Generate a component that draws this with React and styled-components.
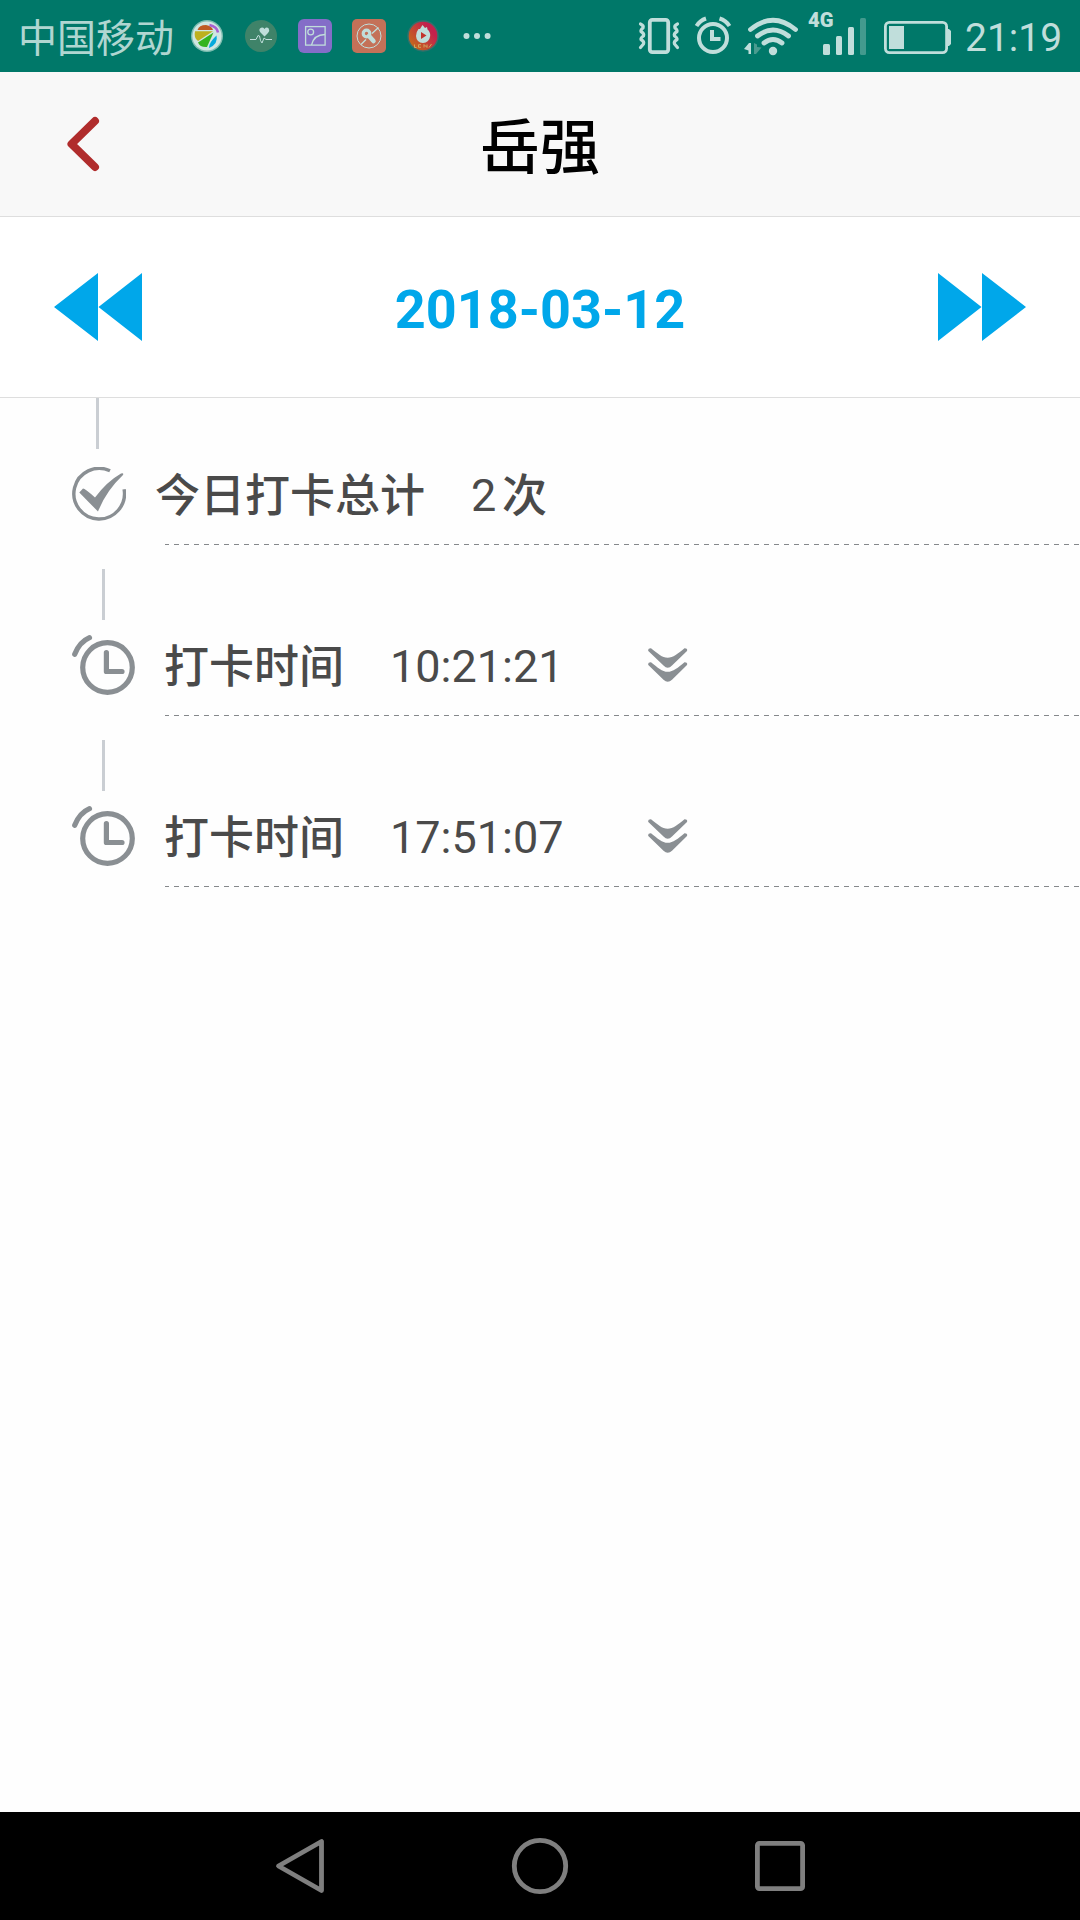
import React, { useState } from "react";
import styled, { createGlobalStyle } from "styled-components";

const punches = ["10:21:21", "17:51:07"];

function BallIcon() {
  return (
    <svg width="34" height="34" viewBox="190 19 34 34">
      <circle cx="207" cy="36" r="16" fill="#7dbdb0" />
      <circle cx="207" cy="36" r="14.6" fill="#cfe6e2" />
      <path d="M197.500 30 Q199 25 206 25 Q212 26 213 30 Z" fill="#bf5a22" />
      <path d="M195 31.300 H213 L198 41 Q193.500 38 195 31.300 Z" fill="#bdb01f" />
      <path d="M213.500 32.500 L207 47 Q200 47.500 198 42.500 Z" fill="#34b41f" />
      <path d="M216.500 35.500 Q218.500 44 209 48 Q208.500 43 216.500 35.500 Z" fill="#04a9dc" />
      <path d="M209.500 25 Q217 26.500 218 32.500" fill="none" stroke="#a75fd0" strokeWidth="2.600" />
    </svg>
  );
}

function HeartIcon() {
  return (
    <svg width="34" height="34" viewBox="244 19 34 34">
      <circle cx="261" cy="36" r="16" fill="#3f8369" />
      <path
        d="M264.500 36.500 L260.500 32.500 Q258.500 30 260 28.500 Q262.500 26.500 264.500 29 Q266.500 26.500 268.700 28.500 Q270 30.500 268 33 Z"
        fill="#c0dedb"
      />
      <path
        d="M250 39.500 H256 L258 35.500 L259.500 36 L260.500 40.500 L262 43 L264 38 L266 39.500 H272"
        fill="none"
        stroke="#c0dedb"
        strokeWidth="1"
      />
    </svg>
  );
}

function PictureIcon() {
  return (
    <svg width="34" height="34" viewBox="298 19 34 34">
      <rect x="298" y="19" width="34" height="34" rx="6" fill="#846dc8" />
      <g fill="none" stroke="#c0dedb" strokeWidth="1.300">
        <rect x="305.600" y="26.600" width="19.500" height="18.500" />
        <circle cx="310.700" cy="32" r="2.900" />
        <path d="M311.500 45 Q314 34.500 325 34.500" />
      </g>
    </svg>
  );
}

function ToolIcon() {
  return (
    <svg width="34" height="34" viewBox="352 19 34 34">
      <rect x="352" y="19" width="34" height="34" rx="5" fill="#c47158" />
      <circle cx="369" cy="36" r="12" fill="none" stroke="#c0dedb" strokeWidth="1" />
      <path d="M361 44.500 L366 39.500 M372 33.500 L378.500 27.500" stroke="#c0dedb" strokeWidth="1.400" />
      <circle cx="366.500" cy="33.500" r="3.300" fill="none" stroke="#c0dedb" strokeWidth="3.200" />
      <path d="M369 36 L373.500 41" stroke="#c0dedb" strokeWidth="4.500" strokeLinecap="round" />
    </svg>
  );
}

function FlameIcon() {
  return (
    <svg width="34" height="34" viewBox="406 19 34 34">
      <defs>
        <linearGradient id="flame" x1="0" y1="1" x2="1" y2="0.200">
          <stop offset="0.150" stopColor="#c56a1c" />
          <stop offset="0.800" stopColor="#c2214c" />
        </linearGradient>
      </defs>
      <circle cx="423" cy="36" r="15" fill="url(#flame)" stroke="#35706c" strokeWidth="1.400" />
      <path
        d="M422.500 25 L425 28 L427 27 L427.500 29.500 Q430.500 32 430.200 36 Q429 43 423 43 Q416.500 42.500 416 36 Q416 32 418.500 29 L420 29 Z"
        fill="#c0dedb"
      />
      <path d="M421 32 L426.500 35.500 L421 39 Z" fill="#c2332c" />
      <path
        d="M414.500 44.500 V47.500 H416.500 M421 44.700 H418.500 V47.300 H421 M424 47.500 V44.500 L427 47.500 V44.500 M429 47.500 L431.500 44"
        fill="none"
        stroke="#cfa75e"
        strokeWidth="1"
      />
    </svg>
  );
}

function MoreIcon() {
  return (
    <svg width="34" height="34" viewBox="460 19 34 34" fill="#c0dedb">
      <circle cx="466.500" cy="36" r="3" />
      <circle cx="477" cy="36" r="3" />
      <circle cx="487.600" cy="36" r="3" />
    </svg>
  );
}

function VibrateIcon() {
  return (
    <svg width="42" height="42" viewBox="638 15 42 42" fill="none" stroke="#c0dedb">
      <rect x="649.800" y="19.900" width="18.400" height="32.200" rx="2.500" strokeWidth="3.800" />
      <path
        d="M640.500 24 Q644 25.500 643 28 Q640.500 30 641 31.500 Q644.500 33.500 643.500 36 Q640.500 38 641 39.500 Q644.500 41.500 643.500 44 L640.500 47.500"
        strokeWidth="3.200"
        strokeLinecap="round"
      />
      <path
        d="M677.500 24 Q674 25.500 675 28 Q677.500 30 677 31.500 Q673.500 33.500 674.500 36 Q677.500 38 677 39.500 Q673.500 41.500 674.500 44 L677.500 47.500"
        strokeWidth="3.200"
        strokeLinecap="round"
      />
    </svg>
  );
}

function AlarmIcon() {
  return (
    <svg width="38" height="42" viewBox="694 15 38 42" fill="none" stroke="#c0dedb" strokeWidth="4">
      <circle cx="713" cy="38" r="14" />
      <path d="M712 30 V39 H720.500" />
      <path d="M696.500 26 Q700 20.500 706 18.500 M719.500 18.500 Q726 20.500 729.500 26" />
    </svg>
  );
}

function WifiIcon() {
  return (
    <svg width="56" height="42" viewBox="743 15 56 42" fill="none" stroke="#c0dedb">
      <path
        d="M750.500 29.500 Q773 11 795.500 29.500 M757.500 36 Q773 24 788.500 36 M764 43 Q773 36 782 43"
        strokeWidth="4.800"
        strokeLinecap="round"
      />
      <circle cx="773" cy="51" r="4.200" fill="#c0dedb" stroke="none" />
      <path d="M751 43 V54 H748.500 V50.500 L744 49 L749 43 Z" fill="#c0dedb" stroke="none" />
      <path d="M754 43 L757 44.500 V47 L761.500 47.500 L756 54 H754 Z" fill="#4a9b8f" stroke="none" />
    </svg>
  );
}

function SignalIcon() {
  return (
    <svg width="60" height="58" viewBox="807 5 60 58" fill="#c0dedb">
      <text x="808" y="27" fontSize="20" fontWeight="900" textLength="25.500" lengthAdjust="spacingAndGlyphs">
        4G
      </text>
      <rect x="823" y="44" width="7" height="11" rx="1.500" />
      <rect x="836" y="36" width="6" height="19" rx="1.500" />
      <rect x="848" y="27" width="6" height="28" rx="1.500" />
      <rect x="860" y="18" width="6" height="37" rx="1.500" fill="#439a8e" />
    </svg>
  );
}

function BatteryIcon() {
  return (
    <svg width="68" height="36" viewBox="884 19 68 36">
      <rect x="885.400" y="22.400" width="61.200" height="30.200" rx="4" fill="none" stroke="#c0dedb" strokeWidth="2.800" />
      <rect x="889" y="26" width="15" height="23" fill="#c0dedb" />
      <path d="M947 29 H949 L951 31 V44 L949 46 H947 Z" fill="#c0dedb" />
    </svg>
  );
}

function CheckIcon() {
  return (
    <svg width="54" height="54" viewBox="72 467 54 54">
      <path d="M110 470.800 A25.300 25.300 0 1 0 124.100 489.300" fill="none" stroke="#8a8f93" strokeWidth="3.400" />
      <path
        d="M79.300 492.500 L83 488.500 Q85 488.500 95 497.500 Q107 481.500 121 473.500 Q124 472.300 123 475 Q106 491 98 511.500 Q90 503.500 79.300 492.500 Z"
        fill="#8a8f93"
      />
    </svg>
  );
}

function ClockIcon() {
  return (
    <svg width="64" height="62" viewBox="72 634 64 62" fill="none" stroke="#8a8f93" strokeWidth="5.200" strokeLinecap="round">
      <circle cx="107.500" cy="667.500" r="24.800" />
      <path d="M106.400 652.500 V671.500 H122" strokeLinejoin="round" />
      <path d="M74.700 654.300 Q79.500 642 89.500 637.700" />
    </svg>
  );
}

function ExpandIcon() {
  return (
    <svg width="40" height="36" viewBox="648 647 40 36" fill="#8a8f93">
      <path d="M648.300 651 Q647.500 648 651 648.200 C658 653.500 662 657.700 667.700 657.700 C673 657.700 678 653.500 684.500 648.200 Q688 648 687 651 L672 665.500 Q667.800 670 663.500 665.500 Z" />
      <path d="M648.300 665 Q647.500 662 651 662.200 C658 667.700 662 671.800 667.700 671.800 C673 671.800 678 667.700 684.500 662.200 Q688 662 687 665 L672 679.700 Q667.800 684 663.500 679.700 Z" />
    </svg>
  );
}

function PunchRow({ time }) {
  const [open, setOpen] = useState(false);

  return (
    <Row>
      <Connector $left={102} />
      <RowBody>
        <IconCell $width={92}>
          <ClockIcon />
        </IconCell>
        <Label $width={226}>打卡时间</Label>
        <Value $width={258}>{time}</Value>
        <ExpandButton onClick={() => setOpen(!open)}>
          <ExpandIcon />
        </ExpandButton>
      </RowBody>
      <Dashes />
    </Row>
  );
}

function App() {
  return (
    <>
      <GlobalStyle />
      <Screen>
        <StatusBar>
          <Carrier>中国移动</Carrier>
          <Notifications>
            <BallIcon />
            <HeartIcon />
            <PictureIcon />
            <ToolIcon />
            <FlameIcon />
            <MoreIcon />
          </Notifications>
          <SystemIcons>
            <VibrateIcon />
            <AlarmIcon />
            <WifiIcon />
            <SignalIcon />
            <BatteryIcon />
          </SystemIcons>
          <Clock>21:19</Clock>
        </StatusBar>

        <Header>
          <BackButton>
            <svg width="34" height="56" viewBox="66 116 34 56">
              <path
                d="M95 121 L71.500 144 L95 167"
                fill="none"
                stroke="#b02c2c"
                strokeWidth="8"
                strokeLinecap="round"
                strokeLinejoin="round"
              />
            </svg>
          </BackButton>
          <h1>岳强</h1>
        </Header>

        <DateBar>
          <DateButton>
            <svg width="88" height="68" viewBox="0 0 88 68" fill="#00a7ea">
              <path d="M0 34 L44 0 V68 Z M44.500 34 L88 0 V68 Z" />
            </svg>
          </DateButton>
          <h2>2018-03-12</h2>
          <DateButton>
            <svg width="88" height="68" viewBox="0 0 88 68" fill="#00a7ea">
              <path d="M0 0 L43.500 34 L0 68 Z M44 0 L88 34 L44 68 Z" />
            </svg>
          </DateButton>
        </DateBar>

        <Timeline>
          <Row>
            <Connector $left={96} />
            <RowBody>
              <IconCell $width={83}>
                <CheckIcon />
              </IconCell>
              <Label $width={316}>今日打卡总计</Label>
              <Value $width={31}>2</Value>
              <Label>次</Label>
            </RowBody>
            <Dashes />
          </Row>
          {punches.map((time) => (
            <PunchRow key={time} time={time} />
          ))}
        </Timeline>

        <NavBar>
          <svg width="50" height="58" viewBox="275 1837 50 58">
            <path d="M321.500 1841.500 V1890.500 L278.500 1866 Z" />
          </svg>
          <svg width="58" height="58" viewBox="511 1837 58 58">
            <circle cx="540" cy="1866" r="25.700" />
          </svg>
          <svg width="50" height="58" viewBox="755 1837 50 58">
            <rect x="757.400" y="1843.400" width="45.200" height="45.200" rx="2" />
          </svg>
        </NavBar>
      </Screen>
    </>
  );
}

const GlobalStyle = createGlobalStyle`
  * {
    box-sizing: border-box;
  }
  body {
    margin: 0;
    font-family: Roboto, "Noto Sans CJK SC", sans-serif;
  }
  h1, h2 {
    margin: 0;
  }
  svg {
    display: block;
    flex-shrink: 0;
  }
  button {
    display: flex;
    padding: 0;
    border: none;
    background: none;
    cursor: pointer;
  }
`;

const Screen = styled.div`
  display: flex;
  flex-direction: column;
  width: 1080px;
  height: 1920px;
  overflow: hidden;
  background-color: #fefefe;
`;

const StatusBar = styled.div`
  display: flex;
  align-items: center;
  height: 72px;
  padding-left: 18px;
  background-color: #007869;
`;

const Carrier = styled.span`
  width: 172px;
  padding-top: 6px;
  font-size: 39px;
  font-weight: 400;
  line-height: 60px;
  white-space: nowrap;
  color: #b0d6d1;
`;

const Notifications = styled.div`
  display: flex;
  gap: 20px;
`;

const SystemIcons = styled.div`
  display: flex;
  align-items: center;
  margin-left: 144px;
  svg:nth-child(2) {
    margin-left: 14px;
  }
  svg:nth-child(3) {
    margin-left: 11px;
  }
  svg:nth-child(4) {
    margin: -4px 17px 0 8px;
  }
  svg:nth-child(5) {
    margin-top: 2px;
  }
`;

const Clock = styled.span`
  margin-left: 13px;
  padding-top: 4px;
  font-size: 39px;
  line-height: 60px;
  color: #c0dedb;
`;

const Header = styled.header`
  display: grid;
  grid-template-columns: 1fr auto 1fr;
  align-items: center;
  height: 145px;
  border-bottom: 1px solid #dedede;
  background-color: #f8f8f8;
  h1 {
    padding-top: 9px;
    font-size: 60px;
    font-weight: 500;
    line-height: 120px;
    color: #000;
  }
`;

const BackButton = styled.button`
  width: 34px;
  margin-left: 66px;
`;

const DateBar = styled.div`
  display: flex;
  align-items: center;
  justify-content: space-between;
  height: 181px;
  padding: 0 54px;
  border-bottom: 1px solid #dedede;
  background-color: #fff;
  h2 {
    padding-top: 4px;
    font-size: 54px;
    font-weight: 700;
    color: #00a7ea;
  }
`;

const DateButton = styled.button`
  width: 88px;
`;

const Timeline = styled.div`
  flex: 1;
`;

const Row = styled.div`
  height: 171px;
`;

const Connector = styled.div`
  width: 3px;
  height: 51px;
  margin-left: ${({ $left }) => $left}px;
  background-color: #caced3;
`;

const RowBody = styled.div`
  display: flex;
  align-items: center;
  height: 95px;
  padding-left: 72px;
  font-size: 45px;
  line-height: 90px;
  color: #4a4a4a;
`;

const IconCell = styled.div`
  width: ${({ $width }) => $width}px;
  margin-bottom: 5px;
`;

const Label = styled.span`
  width: ${({ $width }) => ($width ? `${$width}px` : "auto")};
  padding-top: 1px;
  font-weight: 500;
  white-space: nowrap;
`;

const Value = styled.span`
  width: ${({ $width }) => $width}px;
  padding-bottom: 2px;
`;

const ExpandButton = styled.button`
  width: 40px;
  margin-bottom: 5px;
`;

const Dashes = styled.div`
  height: 1px;
  margin-left: 165px;
  background: repeating-linear-gradient(to right, #85888b 0 5px, transparent 5px 10px) -1px 0 / 1000px 1px;
`;

const NavBar = styled.nav`
  display: flex;
  align-items: center;
  justify-content: center;
  gap: 186px;
  height: 108px;
  background-color: #000;
  svg {
    fill: none;
    stroke: #7f7f7f;
    stroke-width: 4.8px;
    stroke-linejoin: round;
  }
`;

export default App;
